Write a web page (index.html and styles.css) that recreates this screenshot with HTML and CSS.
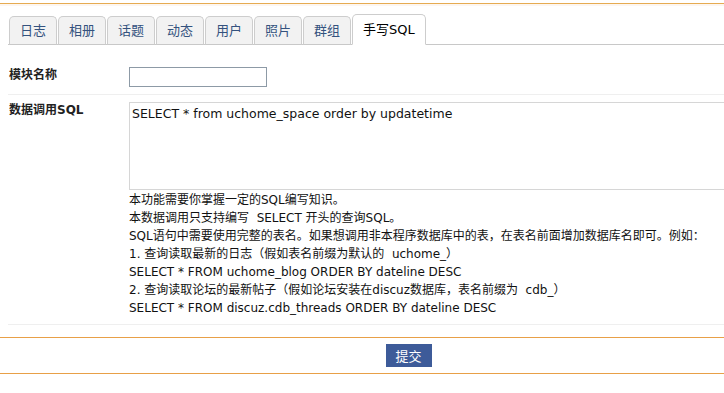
FILE: index.html
```html
<!DOCTYPE html>
<html lang="zh-CN">
<head>
    <meta charset="UTF-8">
    <meta name="viewport" content="width=device-width, initial-scale=1.0">
    <title>数据调用 - 手写SQL</title>
    <link rel="stylesheet" href="styles.css">
</head>
<body>
    <div class="topline"></div>
    <div class="wrap">
        <div class="tabs">
            <a href="#" class="tab">日志</a>
            <a href="#" class="tab">相册</a>
            <a href="#" class="tab">话题</a>
            <a href="#" class="tab">动态</a>
            <a href="#" class="tab">用户</a>
            <a href="#" class="tab">照片</a>
            <a href="#" class="tab">群组</a>
            <a href="#" class="tab active">手写SQL</a>
        </div>
        <form class="form">
            <div class="row">
                <div class="label">模块名称</div>
                <div class="field">
                    <input type="text" class="input">
                </div>
            </div>
            <div class="row">
                <div class="label">数据调用SQL</div>
                <div class="field">
                    <textarea class="sql">SELECT * from uchome_space order by updatetime</textarea>
                    <div class="help">
                        <p>本功能需要你掌握一定的SQL编写知识。</p>
                        <p>本数据调用只支持编写&nbsp; SELECT 开头的查询SQL。</p>
                        <p>SQL语句中需要使用完整的表名。如果想调用非本程序数据库中的表，在表名前面增加数据库名即可。例如：</p>
                        <p>1. 查询读取最新的日志（假如表名前缀为默认的&nbsp; uchome_）</p>
                        <p>SELECT * FROM uchome_blog ORDER BY dateline DESC</p>
                        <p>2. 查询读取论坛的最新帖子（假如论坛安装在discuz数据库，表名前缀为&nbsp; cdb_）</p>
                        <p>SELECT * FROM discuz.cdb_threads ORDER BY dateline DESC</p>
                    </div>
                </div>
            </div>
        </form>
    </div>
    <div class="submitbar">
        <button type="button" class="submit">提交</button>
    </div>
</body>
</html>
```

FILE: styles.css
```css
* {
    margin: 0;
    padding: 0;
    box-sizing: border-box;
}
body {
    font-family: 'DejaVu Sans', 'Noto Sans CJK SC', sans-serif;
    font-size: 12px;
    color: #111;
    background: #fff;
    overflow: hidden;
}
.topline {
    margin-top: 3px;
    height: 3px;
    border-top: 1px solid #e6ab52;
    background: #fdf6f0;
}
.wrap {
    margin-left: 8px;
}
.tabs {
    display: flex;
    align-items: flex-end;
    margin-top: 9px;
    padding-left: 1px;
    border-bottom: 1px solid #c8c8c8;
    height: 30px;
}
.tab {
    display: block;
    height: 29px;
    line-height: 28px;
    padding: 0 10px;
    margin-right: 1px;
    margin-bottom: -1px;
    font-size: 13px;
    color: #34527e;
    text-decoration: none;
    background: #f2f2f2;
    border: 1px solid #cdcdcd;
    border-bottom: 1px solid #c8c8c8;
    border-radius: 5px 5px 0 0;
}
.tab.active {
    height: 31px;
    line-height: 30px;
    color: #000;
    background: #fff;
    border-bottom-color: #fff;
}
.form {
    margin-top: 12px;
}
.row {
    display: flex;
    padding: 10px 0 7px;
    border-bottom: 1px solid #efefef;
}
.row + .row {
    padding-top: 7px;
}
.label {
    width: 121px;
    flex-shrink: 0;
    padding-left: 1px;
    line-height: 16px;
    font-weight: bold;
    color: #222;
}
.field {
    flex: 1;
    min-width: 0;
}
.input {
    display: block;
    width: 138px;
    height: 20px;
    border: 1px solid #8d9aa6;
    background: #fff;
}
.sql {
    display: block;
    width: 100%;
    height: 88px;
    padding: 3px 2px;
    border: 1px solid #d6d6d6;
    border-right: none;
    font-family: 'DejaVu Sans', 'Noto Sans CJK SC', sans-serif;
    font-size: 12.5px;
    line-height: 16px;
    color: #111;
    resize: none;
}
.help {
    padding-top: 1px;
}
.help p {
    line-height: 18px;
    height: 18px;
    white-space: nowrap;
}
.submitbar {
    margin-top: 12px;
    border-top: 1px solid #e8a048;
    border-bottom: 1px solid #e8a048;
    padding: 6px 0 6px 93px;
    display: flex;
    justify-content: center;
}
.submit {
    width: 46px;
    height: 23px;
    background: #3d5b99;
    border: none;
    color: #fff;
    font-family: 'DejaVu Sans', 'Noto Sans CJK SC', sans-serif;
    font-size: 13px;
    cursor: pointer;
}
```
